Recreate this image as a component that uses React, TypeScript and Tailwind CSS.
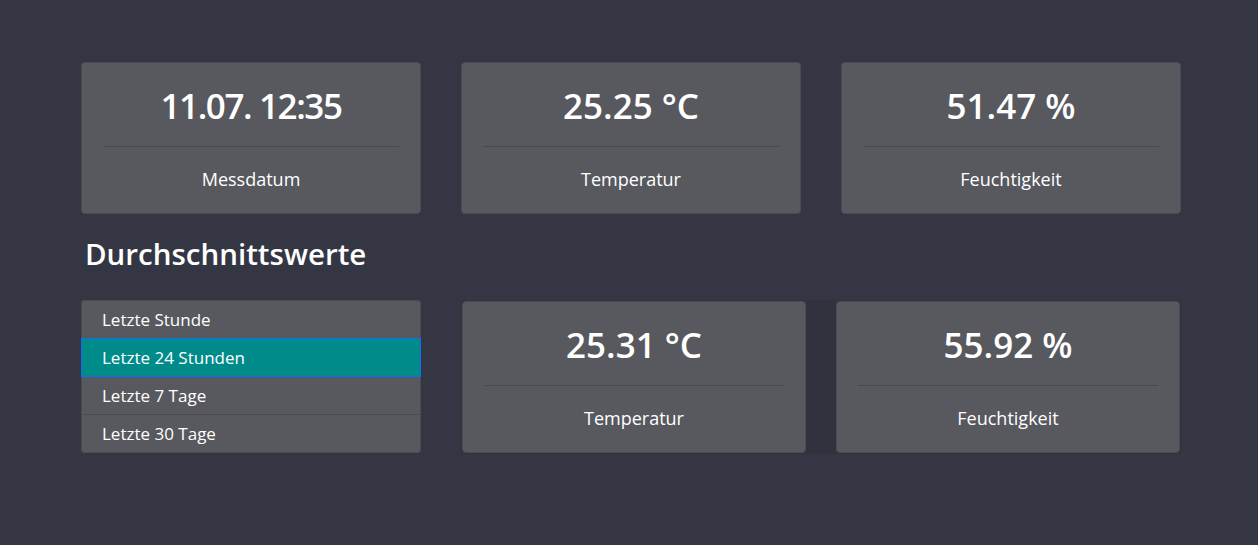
import React from 'react'

const font = { fontFamily: '"Open Sans", "Noto Sans", sans-serif' }

function StatCard({
  value,
  label,
  tight = false,
  className = '',
}: {
  value: string
  label: string
  tight?: boolean
  className?: string
}) {
  return (
    <div className={'flex h-[152px] flex-col rounded border border-[#4b4c52] bg-[#58595e] px-[21px] text-white ' + className}>
      <div
        className={
          'flex h-[84px] items-center justify-center border-b border-[#48494e] pt-[2px] text-[35px] font-semibold leading-none ' +
          (tight ? 'tracking-[-1.4px]' : '')
        }
      >
        {value}
      </div>
      <div className="flex flex-1 items-center justify-center pb-[1px] text-[18px]">{label}</div>
    </div>
  )
}

const ranges = ['Letzte Stunde', 'Letzte 24 Stunden', 'Letzte 7 Tage', 'Letzte 30 Tage']

export default function App() {
  const active = 1
  return (
    <div className="min-h-[545px] bg-[#343743]" style={font}>
      <div className="pl-[81px] pt-[62px]">
        <div className="grid grid-cols-[340px_340px_340px] gap-[40px]">
          <StatCard value="11.07. 12:35" label="Messdatum" tight />
          <StatCard value="25.25 °C" label="Temperatur" />
          <StatCard value="51.47 %" label="Feuchtigkeit" />
        </div>

        <h2 className="mt-[19px] mb-[25px] pl-[4px] text-[29.5px] font-semibold leading-[42px] text-white">
          Durchschnittswerte
        </h2>

        <div className="flex items-start gap-[40px]">
          <div className="flex w-[340px] flex-col rounded bg-[#58595e]">
            {ranges.map((r, i) => {
              const first = i === 0
              const last = i === ranges.length - 1
              const isActive = i === active
              return (
                <div
                  key={r}
                  className={
                    (isActive
                      ? 'relative -mt-px h-[39px] border border-[#0d6efd] bg-[#008b8b] '
                      : 'h-[38px] border-x border-b border-[#4b4c52] ') +
                    (first ? 'h-[39px] rounded-t border-t ' : '') +
                    (last ? 'rounded-b ' : '') +
                    'px-[20px] text-[17px] leading-[37px] text-white'
                  }
                >
                  {r}
                </div>
              )
            })}
          </div>
          <div className="flex w-[720px] gap-[30px] rounded bg-[#30333d] p-px">
            <StatCard value="25.31 °C" label="Temperatur" className="flex-1" />
            <StatCard value="55.92 %" label="Feuchtigkeit" className="flex-1" />
          </div>
        </div>
      </div>
    </div>
  )
}
